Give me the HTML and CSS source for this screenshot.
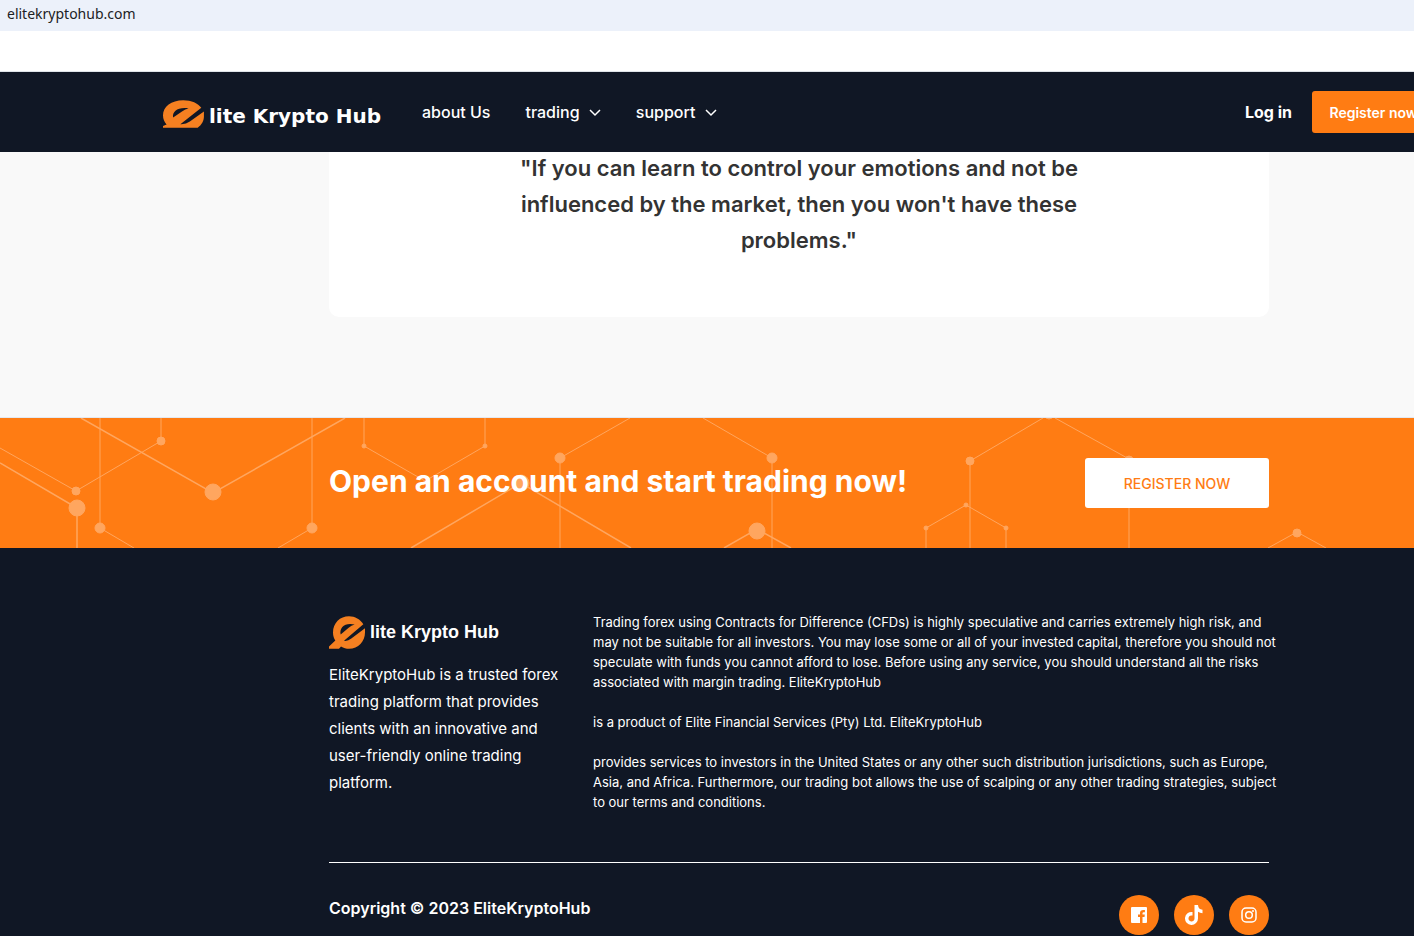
FILE: index.html
```html
<!DOCTYPE html>
<html lang="en">
<head>
    <meta charset="UTF-8">
    <meta name="viewport" content="width=device-width, initial-scale=1.0">
    <title>Elite Krypto Hub</title>
    <link rel="stylesheet" href="styles.css">
</head>
<body>
    <div class="address-bar">elitekryptohub.com</div>
    <div class="page">
        <header class="site-header">
            <div class="header-inner">
                <a class="logo logo-header" href="#">
                    <svg class="logo-icon" viewBox="0 0 125 84" aria-hidden="true">
                        <path fill="#f58021" d="M62 0C25 0 0 20 0 46C0 58 4 66 11 74L0 79V84H106C118 76 125 63 125 50V34L82 65Q70 74 53 73L117 23C107 9 87 0 62 0Z"/>
                        <path fill="#101725" d="M31 53C27 34 47 20 78 25Q68 27 58 34Z"/>
                    </svg>
                    <span>lite Krypto Hub</span>
                </a>
                <nav class="main-nav">
                    <a href="#">about Us</a>
                    <a href="#">trading <svg class="chevron" viewBox="0 0 12 8" aria-hidden="true"><path d="M1 1l5 5 5-5"/></svg></a>
                    <a href="#">support <svg class="chevron" viewBox="0 0 12 8" aria-hidden="true"><path d="M1 1l5 5 5-5"/></svg></a>
                </nav>
                <div class="header-actions">
                    <a class="login" href="#">Log in</a>
                    <button class="btn btn-orange" type="button">Register now</button>
                </div>
            </div>
        </header>

        <main class="quote-section">
            <div class="container quote-card">
                <blockquote>"If you can learn to control your emotions and not be influenced by the market, then you won't have these problems."</blockquote>
            </div>
        </main>

        <section class="cta">
            <svg class="cta-lines" width="1414" height="130" viewBox="0 0 1414 130" aria-hidden="true">
                <g class="thin">
                    <path d="M0 30L76 73L161 23V0M364 0V28L425 63L485 28V0M926 130V110L966 87L1006 110V130"/>
                    <path d="M560 130V40L630 0M703 0L772 40V130M970 130V43L1043 0M1055 0L1129 41V130M1268 130L1297 114L1326 130"/>
                    <path d="M100 0V110L134 130M312 0V110L278 130"/>
                </g>
                <g class="thick">
                    <path d="M0 45L77 90V130M81 0L213 75L345 0M411 130L521 65L631 130M724 130L757 111L791 130"/>
                </g>
                <g class="dots">
                    <circle cx="76" cy="73" r="4"/><circle cx="161" cy="23" r="4"/>
                    <circle cx="77" cy="90" r="8"/><circle cx="213" cy="74" r="8"/>
                    <circle cx="100" cy="110" r="5"/><circle cx="312" cy="110" r="5"/>
                    <circle cx="364" cy="28" r="2"/><circle cx="485" cy="28" r="2"/>
                    <circle cx="521" cy="65" r="8"/><circle cx="560" cy="40" r="5"/>
                    <circle cx="772" cy="40" r="5"/><circle cx="757" cy="113" r="8"/>
                    <circle cx="926" cy="110" r="2"/><circle cx="966" cy="87" r="2"/>
                    <circle cx="1006" cy="110" r="2"/><circle cx="970" cy="43" r="4"/>
                    <circle cx="1049" cy="-3" r="4"/><circle cx="1129" cy="42" r="4"/><circle cx="1297" cy="115" r="4"/>
                </g>
            </svg>
            <div class="container cta-inner">
                <h2>Open an account and start trading now!</h2>
                <button class="btn btn-white" type="button">REGISTER NOW</button>
            </div>
        </section>

        <footer class="site-footer">
            <div class="container">
                <div class="footer-top">
                    <div class="footer-about">
                        <a class="logo logo-footer" href="#">
                            <svg class="logo-icon" viewBox="0 0 108 98" aria-hidden="true">
                                <path fill="#f58021" d="M60 0C33 0 12 20 12 49C12 60 15 67 19 73L0 91V98H30L36 91C44 96 52 98 60 98C88 98 108 76 108 49V36L67 67Q56 76 45 74L103 24C94 9 78 0 60 0Z"/>
                                <path fill="#101725" d="M35 55C30 34 48 18 77 25Q67 28 59 35Z"/>
                            </svg>
                            <span>lite Krypto Hub</span>
                        </a>
                        <p>EliteKryptoHub is a trusted forex trading platform that provides clients with an innovative and user-friendly online trading platform.</p>
                    </div>
                    <div class="footer-legal">
                        <p>Trading forex using Contracts for Difference (CFDs) is highly speculative and carries extremely high risk, and may not be suitable for all investors. You may lose some or all of your invested capital, therefore you should not speculate with funds you cannot afford to lose. Before using any service, you should understand all the risks associated with margin trading. EliteKryptoHub</p>
                        <p>is a product of Elite Financial Services (Pty) Ltd. EliteKryptoHub</p>
                        <p>provides services to investors in the United States or any other such distribution jurisdictions, such as Europe, Asia, and Africa. Furthermore, our trading bot allows the use of scalping or any other trading strategies, subject to our terms and conditions.</p>
                    </div>
                </div>
                <div class="footer-bottom">
                    <p>Copyright © 2023 EliteKryptoHub</p>
                    <div class="social">
                        <a href="#" aria-label="Facebook">
                            <svg width="20" height="20" viewBox="0 0 20 20"><path fill="#fff" d="M3 2H17Q18 2 18 3V17Q18 18 17 18H13.500V12H15.500L15.800 9.600H13.500V8.300Q13.500 7.200 14.600 7.200H15.900V5.100Q11 4.400 11 8V9.600H9V12H11V18H3Q2 18 2 17V3Q2 2 3 2Z"/></svg>
                        </a>
                        <a href="#" aria-label="TikTok">
                            <svg width="20" height="20" viewBox="0 0 20 20"><path fill="#fff" d="M10.500 0H14Q14.300 4.500 18.500 4.700V8.200Q16 8.200 14 6.800V13.300A6.500 6.500 0 1 1 8.500 7V10.600A3 3 0 1 0 10.500 13.400Z"/></svg>
                        </a>
                        <a href="#" aria-label="Instagram">
                            <svg width="20" height="20" viewBox="0 0 20 20" fill="none" stroke="#fff"><rect x="3" y="3" width="14" height="14" rx="4" stroke-width="1.500"/><circle cx="10" cy="10" r="3.300" stroke-width="1.500"/><circle cx="14" cy="6" r="1" fill="#fff" stroke="none"/></svg>
                        </a>
                    </div>
                </div>
            </div>
        </footer>
    </div>
</body>
</html>
```

FILE: styles.css
```css
* {
    margin: 0;
    padding: 0;
    box-sizing: border-box;
}
body {
    font-family: Inter, "Liberation Sans", sans-serif;
    background-color: #101725;
    color: #ffffff;
    overflow-x: hidden;
}
a {
    color: inherit;
    text-decoration: none;
}
.address-bar {
    height: 31px;
    padding: 4px 7px;
    background-color: #ecf1fa;
    color: #202124;
    font-family: "Noto Sans", sans-serif;
    font-size: 14px;
    line-height: 20px;
}
/* The page is wider than the window and runs off its right edge */
.page {
    width: calc(100% + 184px);
    padding-top: 40px;
    background-color: #ffffff;
}
.container {
    max-width: 940px;
    margin: 0 auto;
}

/* Header */
.site-header {
    position: relative;
    z-index: 2;
    background-color: #101725;
    border-top: 1px solid #dfe3e8;
}
.header-inner {
    display: flex;
    align-items: center;
    max-width: 1272px;
    height: 80px;
    margin: 0 auto;
}
.logo {
    display: flex;
    align-items: center;
    font-weight: bold;
    white-space: nowrap;
}
.logo-header {
    gap: 5px;
    width: 218px;
    padding-top: 3px;
    font-family: "DejaVu Sans", sans-serif;
    font-size: 20px;
}
.logo-header .logo-icon {
    width: 42px;
    height: 28px;
}
.logo-header span {
    padding-top: 4px;
}
.main-nav {
    display: flex;
    gap: 32px;
    margin-left: 41px;
    font-size: 16px;
    font-weight: 500;
}
.main-nav a {
    padding-right: 3px;
}
.chevron {
    width: 12px;
    height: 8px;
    margin: 0 0 1px 5px;
    fill: none;
    stroke: #ffffff;
    stroke-width: 1.5;
}
.header-actions {
    display: flex;
    align-items: center;
    gap: 20px;
    margin-left: auto;
}
.login {
    font-size: 16px;
    font-weight: 700;
}
.btn {
    border: none;
    border-radius: 3px;
    font-family: inherit;
    font-size: 14px;
    cursor: pointer;
}
.btn-orange {
    width: 123px;
    height: 42px;
    background-color: #ff7c13;
    color: #ffffff;
    font-weight: 600;
}
.btn-white {
    width: 184px;
    height: 50px;
    background-color: #ffffff;
    color: #ff7c13;
    font-weight: 500;
}

/* Quote */
.quote-section {
    margin-top: -2px;
    padding-bottom: 100px;
    background-color: #f9f9f9;
    border-bottom: 1px solid #e3e9f2;
}
.quote-card {
    padding-bottom: 59px;
    background-color: #ffffff;
    border-radius: 0 0 10px 10px;
}
.quote-card blockquote {
    max-width: 580px;
    margin: 0 auto;
    color: #333333;
    font-size: 22px;
    font-weight: 600;
    line-height: 36px;
    text-align: center;
}

/* Call to action */
.cta {
    position: relative;
    height: 130px;
    background-color: #ff7c13;
    overflow: hidden;
}
.cta-lines {
    position: absolute;
    top: 0;
    left: 0;
    fill: none;
    stroke: #ffa65f;
}
.cta-lines .thin {
    stroke-width: 1;
}
.cta-lines .thick {
    stroke-width: 1.5;
}
.cta-lines .dots {
    fill: #ffa65f;
}
.cta-inner {
    position: relative;
    display: flex;
    justify-content: space-between;
    padding-top: 40px;
}
.cta h2 {
    font-size: 30px;
    font-weight: 700;
    line-height: 46px;
}

/* Footer */
.site-footer {
    padding-top: 64px;
    background-color: #101725;
}
.footer-top {
    display: flex;
    gap: 28px;
    padding-bottom: 50px;
    border-bottom: 1px solid #ffffff;
}
.footer-about {
    flex: 0 0 236px;
    padding-top: 4px;
}
.logo-footer {
    gap: 5px;
    font-family: "Liberation Sans", sans-serif;
    font-size: 18px;
}
.logo-footer .logo-icon {
    width: 36px;
    height: 33px;
}
.footer-about p {
    padding-top: 12px;
    font-size: 15px;
    line-height: 27px;
}
.footer-legal {
    flex: 1;
    margin-right: -10px;
    font-size: 13px;
    line-height: 20px;
}
.footer-legal p + p {
    margin-top: 20px;
}
.footer-bottom {
    display: flex;
    justify-content: space-between;
    padding-top: 32px;
    font-size: 16px;
    font-weight: 600;
    line-height: 26px;
}
.social {
    display: flex;
    gap: 15px;
}
.social a {
    display: flex;
    align-items: center;
    justify-content: center;
    width: 40px;
    height: 40px;
    border-radius: 50%;
    background-color: #ff7c13;
}
```
